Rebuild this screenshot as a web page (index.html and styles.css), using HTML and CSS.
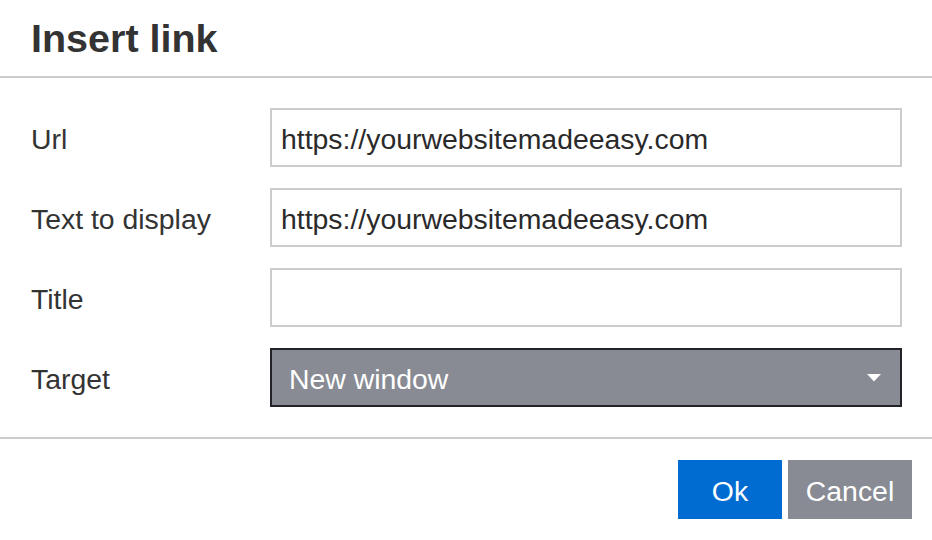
FILE: index.html
```html
<!DOCTYPE html>
<html lang="en">
<head>
<meta charset="utf-8">
<title>Insert link</title>
<link rel="stylesheet" href="styles.css">
</head>
<body>
<div class="dialog">
  <div class="dialog-header">
    <h1 class="dialog-title">Insert link</h1>
  </div>
  <div class="dialog-body">
    <label class="field-label">Url</label>
    <div class="text-input">https://yourwebsitemadeeasy.com</div>
    <label class="field-label">Text to display</label>
    <div class="text-input">https://yourwebsitemadeeasy.com</div>
    <label class="field-label">Title</label>
    <div class="text-input"></div>
    <label class="field-label">Target</label>
    <div class="select-input">
      <span class="select-value">New window</span>
      <svg class="select-arrow" width="16" height="8" viewBox="0 0 16 8"><path d="M1 0 L15 0 L8 7.5 Z" fill="#ffffff"/></svg>
    </div>
  </div>
  <div class="dialog-footer">
    <button class="btn btn-primary"><span class="btn-text">Ok</span></button>
    <button class="btn btn-secondary"><span class="btn-text">Cancel</span></button>
  </div>
</div>
</body>
</html>
```
FILE: styles.css
```css
html, body {
  margin: 0;
  padding: 0;
  background: #ffffff;
}
body {
  font-family: "Liberation Sans", Arial, Helvetica, sans-serif;
  color: #2f2f2f;
}
.dialog {
  width: 932px;
  height: 540px;
  display: flex;
  flex-direction: column;
}
.dialog-header {
  height: 76px;
  border-bottom: 2px solid #cccccc;
  display: flex;
  align-items: center;
  padding-left: 31px;
}
.dialog-title {
  margin: 0;
  font-size: 39.5px;
  font-weight: bold;
  color: #333333;
  line-height: 1;
  padding-top: 2px;
}
.dialog-body {
  display: grid;
  grid-template-columns: 239px 632px;
  grid-auto-rows: 59px;
  row-gap: 21px;
  padding: 30px 30px 30px 31px;
  align-items: center;
}
.field-label {
  font-size: 28.4px;
  color: #333333;
  padding-top: 3px;
}
.text-input {
  box-sizing: border-box;
  height: 59px;
  border: 2px solid #cccccc;
  padding: 3px 9px 0 9px;
  display: flex;
  align-items: center;
  font-size: 28.4px;
  color: #2a2a2a;
}
.select-input {
  box-sizing: border-box;
  height: 59px;
  border: 2px solid #222328;
  background: #888b93;
  padding: 3px 18px 0 17px;
  display: flex;
  align-items: center;
  justify-content: space-between;
  font-size: 28.4px;
  color: #ffffff;
}
.select-arrow {
  display: block;
  margin-top: -3px;
}
.dialog-footer {
  border-top: 2px solid #cccccc;
  padding: 21px 20px 21px 20px;
  display: flex;
  justify-content: flex-end;
  gap: 6px;
}
.btn {
  height: 59px;
  border: none;
  margin: 0;
  padding: 3px 0 0 0;
  font-family: "Liberation Sans", Arial, Helvetica, sans-serif;
  font-size: 28.4px;
  color: #ffffff;
  cursor: pointer;
}
.btn-primary {
  width: 104px;
  background: #006cd1;
}
.btn-secondary {
  width: 124px;
  background: #888b93;
}
```
